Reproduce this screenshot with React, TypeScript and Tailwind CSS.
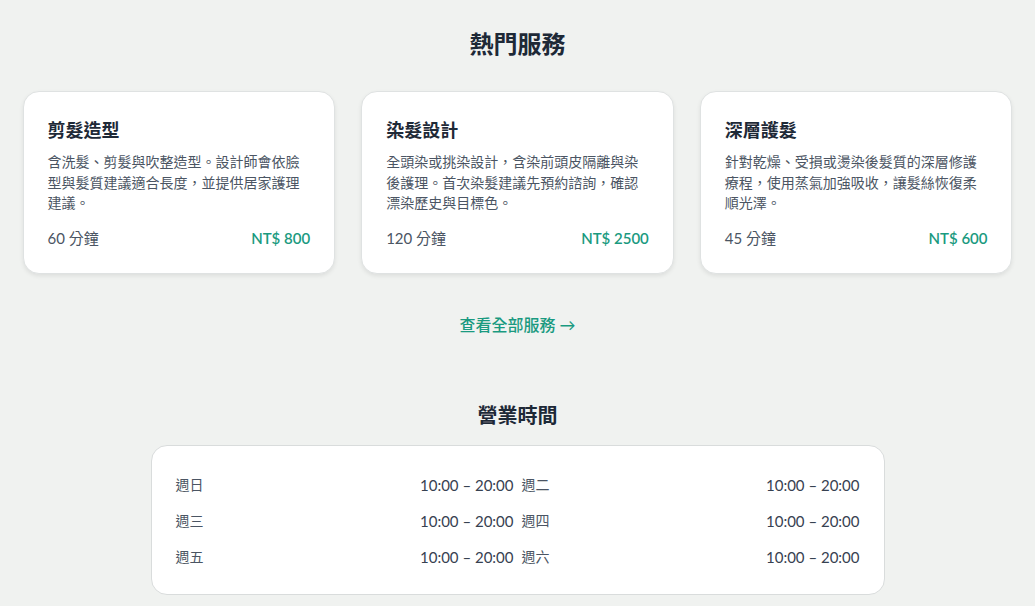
import React from "react";

const services = [
  {
    name: "剪髮造型",
    desc: "含洗髮、剪髮與吹整造型。設計師會依臉型與髮質建議適合長度，並提供居家護理建議。",
    time: "60 分鐘",
    price: "NT$ 800",
  },
  {
    name: "染髮設計",
    desc: "全頭染或挑染設計，含染前頭皮隔離與染後護理。首次染髮建議先預約諮詢，確認漂染歷史與目標色。",
    time: "120 分鐘",
    price: "NT$ 2500",
  },
  {
    name: "深層護髮",
    desc: "針對乾燥、受損或燙染後髮質的深層修護療程，使用蒸氣加強吸收，讓髮絲恢復柔順光澤。",
    time: "45 分鐘",
    price: "NT$ 600",
  },
];

const hours = [
  ["週日", "10:00 – 20:00"],
  ["週二", "10:00 – 20:00"],
  ["週三", "10:00 – 20:00"],
  ["週四", "10:00 – 20:00"],
  ["週五", "10:00 – 20:00"],
  ["週六", "10:00 – 20:00"],
];

export default function App() {
  return (
    <div
      className="min-h-[606px] bg-[#f0f2f0] pt-[28px] pb-10"
      style={{ fontFamily: '"Lato", "Noto Sans CJK TC", sans-serif' }}
    >
      <h2 className="text-center text-[24px] leading-[32px] font-bold text-[#1e2937]">熱門服務</h2>

      <div className="mx-auto mt-[31px] grid w-[990px] grid-cols-3 gap-[26px]">
        {services.map((s) => (
          <div
            key={s.name}
            className="flex flex-col rounded-2xl border border-[#dfe2e2] bg-white px-6 pt-6 pb-[25px] shadow-[0_2px_4px_rgba(0,0,0,0.08)]"
          >
            <h3 className="text-[18px] leading-[28px] font-bold text-[#1e2937]">{s.name}</h3>
            <p className="mt-2 text-[14px] leading-[20.5px] text-[#4b5563]">{s.desc}</p>
            <div className="mt-[14px] flex items-center justify-between text-[15px] leading-[20px]">
              <span className="text-[#4b5563]">{s.time}</span>
              <span className="font-semibold text-[#1a9a80]">{s.price}</span>
            </div>
          </div>
        ))}
      </div>

      <div className="mt-[39px] text-center">
        <a className="text-[16px] leading-[24px] font-medium text-[#1a9a80]">查看全部服務 →</a>
      </div>

      <h2 className="mt-16 text-center text-[20px] leading-[28px] font-bold text-[#1e2937]">營業時間</h2>

      <div className="mx-auto mt-4 w-[734px] rounded-2xl border border-[#d9dcdc] bg-white px-6 pt-[21px] pb-[19px]">
        <div className="grid grid-cols-2 gap-x-2">
          {hours.map(([d, t]) => (
            <div key={d} className="flex items-center justify-between py-2 text-[14px] leading-[20px]">
              <span className="text-[#4b5563]">{d}</span>
              <span className="text-[15px] text-[#374151]">{t}</span>
            </div>
          ))}
        </div>
      </div>
    </div>
  );
}
